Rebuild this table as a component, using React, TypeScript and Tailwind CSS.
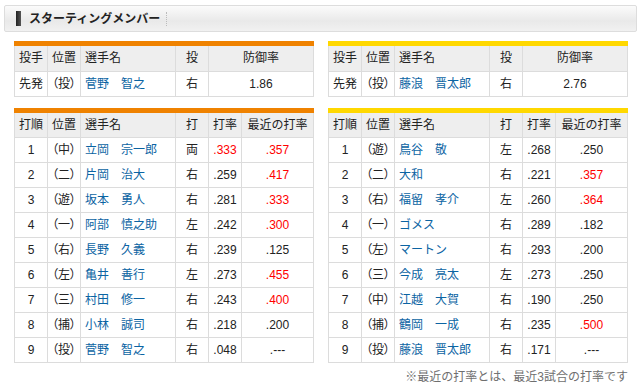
import React from "react";

type Pitcher = { pos: string; name: string; hand: string; era: string };
type Batter = {
  no: number;
  pos: string;
  name: string;
  hand: string;
  avg: string;
  recent: string;
  avgHot?: boolean;
  recentHot?: boolean;
};

const giants: { pitcher: Pitcher; batters: Batter[] } = {
  pitcher: { pos: "（投）", name: "菅野　智之", hand: "右", era: "1.86" },
  batters: [
    { no: 1, pos: "（中）", name: "立岡　宗一郎", hand: "両", avg: ".333", recent: ".357", avgHot: true, recentHot: true },
    { no: 2, pos: "（二）", name: "片岡　治大", hand: "右", avg: ".259", recent: ".417", recentHot: true },
    { no: 3, pos: "（遊）", name: "坂本　勇人", hand: "右", avg: ".281", recent: ".333", recentHot: true },
    { no: 4, pos: "（一）", name: "阿部　慎之助", hand: "左", avg: ".242", recent: ".300", recentHot: true },
    { no: 5, pos: "（右）", name: "長野　久義", hand: "右", avg: ".239", recent: ".125" },
    { no: 6, pos: "（左）", name: "亀井　善行", hand: "左", avg: ".273", recent: ".455", recentHot: true },
    { no: 7, pos: "（三）", name: "村田　修一", hand: "右", avg: ".243", recent: ".400", recentHot: true },
    { no: 8, pos: "（捕）", name: "小林　誠司", hand: "右", avg: ".218", recent: ".200" },
    { no: 9, pos: "（投）", name: "菅野　智之", hand: "右", avg: ".048", recent: ".---" },
  ],
};

const tigers: { pitcher: Pitcher; batters: Batter[] } = {
  pitcher: { pos: "（投）", name: "藤浪　晋太郎", hand: "右", era: "2.76" },
  batters: [
    { no: 1, pos: "（遊）", name: "鳥谷　敬", hand: "左", avg: ".268", recent: ".250" },
    { no: 2, pos: "（二）", name: "大和", hand: "右", avg: ".221", recent: ".357", recentHot: true },
    { no: 3, pos: "（右）", name: "福留　孝介", hand: "左", avg: ".260", recent: ".364", recentHot: true },
    { no: 4, pos: "（一）", name: "ゴメス", hand: "右", avg: ".289", recent: ".182" },
    { no: 5, pos: "（左）", name: "マートン", hand: "右", avg: ".293", recent: ".200" },
    { no: 6, pos: "（三）", name: "今成　亮太", hand: "左", avg: ".273", recent: ".250" },
    { no: 7, pos: "（中）", name: "江越　大賀", hand: "右", avg: ".190", recent: ".250" },
    { no: 8, pos: "（捕）", name: "鶴岡　一成", hand: "右", avg: ".235", recent: ".500", recentHot: true },
    { no: 9, pos: "（投）", name: "藤浪　晋太郎", hand: "右", avg: ".171", recent: ".---" },
  ],
};

const th = "border border-t-0 border-[#dcdcdc] bg-[#eeeeee] font-normal px-1";
const td = "border border-[#dcdcdc] px-1";
const posCls = "[font-feature-settings:'palt']";

const PitcherTable = ({ p, bar }: { p: Pitcher; bar: string }) => (
  <div className={`w-[300px] border-t-[5px] ${bar}`}>
    <table className="w-[300px] table-fixed border-collapse">
      <colgroup>
        <col className="w-[33px]" />
        <col className="w-[33px]" />
        <col className="w-[95px]" />
        <col className="w-[33px]" />
        <col />
      </colgroup>
      <thead>
        <tr className="h-[25px]">
          <th className={`${th} text-left`}>投手</th>
          <th className={`${th} text-left`}>位置</th>
          <th className={`${th} text-left`}>選手名</th>
          <th className={`${th} text-center`}>投</th>
          <th className={`${th} text-center`}>防御率</th>
        </tr>
      </thead>
      <tbody>
        <tr className="h-[25px]">
          <td className={td}>先発</td>
          <td className={`${td} ${posCls}`}>{p.pos}</td>
          <td className={`${td} text-[#0b64a3]`}>{p.name}</td>
          <td className={`${td} text-center`}>{p.hand}</td>
          <td className={`${td} text-center`}>{p.era}</td>
        </tr>
      </tbody>
    </table>
  </div>
);

const BatterTable = ({ rows, bar }: { rows: Batter[]; bar: string }) => (
  <div className={`w-[300px] border-t-[5px] ${bar}`}>
    <table className="w-[300px] table-fixed border-collapse">
      <colgroup>
        <col className="w-[33px]" />
        <col className="w-[33px]" />
        <col className="w-[95px]" />
        <col className="w-[33px]" />
        <col className="w-[33px]" />
        <col />
      </colgroup>
      <thead>
        <tr className="h-[25px]">
          <th className={`${th} text-left`}>打順</th>
          <th className={`${th} text-left`}>位置</th>
          <th className={`${th} text-left`}>選手名</th>
          <th className={`${th} text-center`}>打</th>
          <th className={`${th} text-center px-0`}>打率</th>
          <th className={`${th} text-center px-0`}>最近の打率</th>
        </tr>
      </thead>
      <tbody>
        {rows.map((r) => (
          <tr key={r.no} className="h-[25px]">
            <td className={`${td} text-center`}>{r.no}</td>
            <td className={`${td} ${posCls}`}>{r.pos}</td>
            <td className={`${td} text-[#0b64a3]`}>{r.name}</td>
            <td className={`${td} text-center`}>{r.hand}</td>
            <td className={`${td} text-center px-0 ${r.avgHot ? "text-[#ff0000]" : ""}`}>{r.avg}</td>
            <td className={`${td} text-center ${r.recentHot ? "text-[#ff0000]" : ""}`}>{r.recent}</td>
          </tr>
        ))}
      </tbody>
    </table>
  </div>
);

export default function App() {
  return (
    <div className="w-[639px] h-[384px] bg-white text-[12px] leading-none text-[#222222] font-['Liberation_Sans','Noto_Sans_CJK_JP',sans-serif] pt-[5px]">
      <div className="ml-[4px] w-[633px] h-[27px] border border-[#dddddd] rounded-[2px] bg-[linear-gradient(#fbfbfb,#e9e9e9_60%,#f1f1f1)] flex items-center pl-[11px]">
        <span className="w-[5px] h-[15px] bg-[linear-gradient(90deg,#222,#555)]" />
        <span className="ml-[8px] font-bold text-[12px] text-[#222]">スターティングメンバー</span>
        <span className="ml-[6px] h-[14px] border-l border-dotted border-[#bbbbbb]" />
      </div>

      <div className="flex gap-[14px] pl-[14px] mt-[9px]">
        <PitcherTable p={giants.pitcher} bar="border-[#ef8200]" />
        <PitcherTable p={tigers.pitcher} bar="border-[#ffd800]" />
      </div>

      <div className="flex gap-[14px] pl-[14px] mt-[11px]">
        <BatterTable rows={giants.batters} bar="border-[#ef8200]" />
        <BatterTable rows={tigers.batters} bar="border-[#ffd800]" />
      </div>

      <p className="w-[628px] text-right mt-[8px] text-[#6f6f6f]">
        ※最近の打率とは、最近3試合の打率です
      </p>
    </div>
  );
}
